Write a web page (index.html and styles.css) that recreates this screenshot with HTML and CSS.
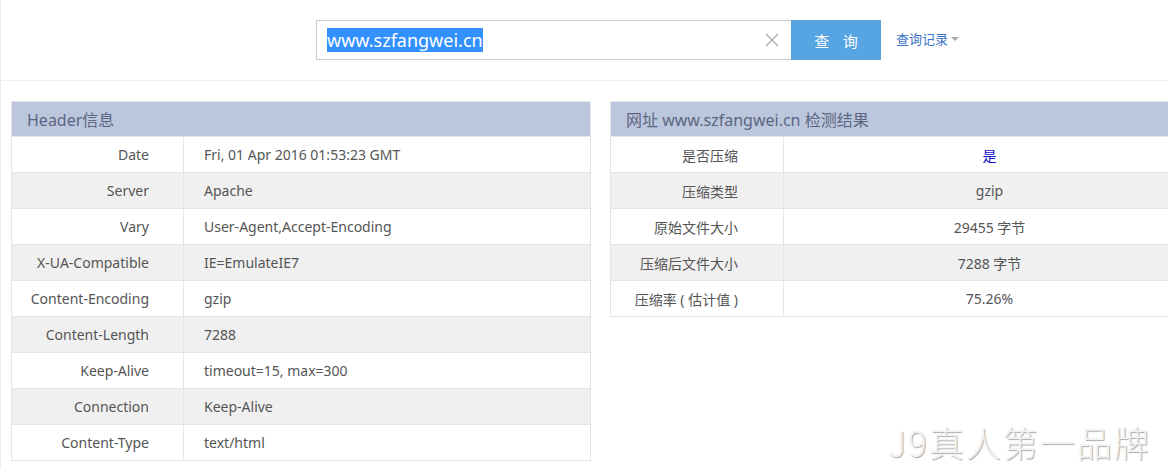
FILE: index.html
```html
<!DOCTYPE html>
<html lang="zh-CN">
<head>
<meta charset="utf-8">
<title>Gzip 检测</title>
<link rel="stylesheet" href="styles.css">
</head>
<body>
<div class="topbar">
  <div class="search">
    <div class="search-box">
      <span class="query"><span class="sel">www.szfangwei.cn</span></span>
      <svg class="clear" width="14" height="14" viewBox="0 0 14 14"><path d="M1 1L13 13M13 1L1 13" stroke="#aaa" stroke-width="1.2" fill="none"/></svg>
    </div>
    <button class="search-btn">查 询</button>
    <a class="history">查询记录<span class="caret"></span></a>
  </div>
</div>
<div class="content">
  <table class="info headers">
    <thead><tr><th colspan="2">Header信息</th></tr></thead>
    <tbody>
      <tr><td class="k">Date</td><td class="v">Fri, 01 Apr 2016 01:53:23 GMT</td></tr>
      <tr><td class="k">Server</td><td class="v">Apache</td></tr>
      <tr><td class="k">Vary</td><td class="v">User-Agent,Accept-Encoding</td></tr>
      <tr><td class="k">X-UA-Compatible</td><td class="v">IE=EmulateIE7</td></tr>
      <tr><td class="k">Content-Encoding</td><td class="v">gzip</td></tr>
      <tr><td class="k">Content-Length</td><td class="v">7288</td></tr>
      <tr><td class="k">Keep-Alive</td><td class="v">timeout=15, max=300</td></tr>
      <tr><td class="k">Connection</td><td class="v">Keep-Alive</td></tr>
      <tr><td class="k">Content-Type</td><td class="v">text/html</td></tr>
    </tbody>
  </table>
  <table class="info result">
    <thead><tr><th colspan="2">网址 www.szfangwei.cn 检测结果</th></tr></thead>
    <tbody>
      <tr><td class="k">是否压缩</td><td class="v yes">是</td></tr>
      <tr><td class="k">压缩类型</td><td class="v">gzip</td></tr>
      <tr><td class="k">原始文件大小</td><td class="v">29455 字节</td></tr>
      <tr><td class="k">压缩后文件大小</td><td class="v">7288 字节</td></tr>
      <tr><td class="k">压缩率 ( 估计值 )</td><td class="v">75.26%</td></tr>
    </tbody>
  </table>
</div>
<div class="brand">J9真人第一品牌</div>
</body>
</html>
```

FILE: styles.css
```css
html, body {
  margin: 0;
  padding: 0;
  overflow: hidden;
  height: 100%;
}
body {
  font-family: "Noto Sans", "Noto Sans CJK SC", sans-serif;
  font-size: 14px;
  color: #555;
  background: #fff;
  border-left: 1px solid #eee;
  box-sizing: border-box;
  position: relative;
}
.topbar {
  height: 80px;
  border-bottom: 1px solid #eee;
  box-sizing: content-box;
}
.search {
  display: flex;
  align-items: center;
  padding: 20px 0 0 315px;
}
.search-box {
  height: 38px;
  border: 1px solid #c4cadb;
  border-right: none;
  display: flex;
  align-items: center;
  justify-content: space-between;
  padding: 0 10px 0 10px;
  box-sizing: content-box;
  width: 454px;
}
.query {
  font-size: 18px;
  line-height: 22px;
}
.sel {
  background: #3390ff;
  color: #fff;
}
.clear {
  margin-right: 2px;
}
.search-btn {
  width: 90px;
  height: 40px;
  border: none;
  background: #56a5e2;
  color: #fff;
  font-family: "Noto Sans CJK SC", sans-serif;
  font-size: 15px;
  letter-spacing: 5px;
  padding: 0 0 0 5px;
}
.history {
  margin-left: 15px;
  margin-top: -3px;
  color: #3a72c5;
  font-family: "Noto Sans CJK SC", sans-serif;
  font-size: 13px;
  display: flex;
  align-items: center;
}
.caret {
  width: 0;
  height: 0;
  border-left: 4px solid transparent;
  border-right: 4px solid transparent;
  border-top: 4px solid #aaa;
  margin-left: 3px;
}
.content {
  display: flex;
  align-items: flex-start;
  gap: 19px;
  padding: 20px 0 0 10px;
  width: 1300px;
}
.info {
  border-collapse: collapse;
  width: 580px;
  flex: none;
}
.info th {
  background: #bcc6dd;
  color: #5b6683;
  font-weight: normal;
  font-size: 16px;
  text-align: left;
  height: 34px;
  padding: 0 0 0 15px;
  border: 1px solid #e4e6ea;
  border-bottom: none;
}
.info td {
  border: 1px solid #e5e5e5;
  height: 35px;
  padding: 0;
}
.info tbody tr:nth-child(even) td {
  background: #f0f0f0;
}
.info td.k {
  width: 172px;
  text-align: right;
  padding-right: 34px;
  box-sizing: border-box;
}
.headers td.v {
  padding-left: 20px;
}
.result {
  width: 586px;
}
.result td.k {
  width: 173px;
  padding-right: 45px;
}
.result td.v {
  text-align: center;
}
.result td.yes {
  color: #1010c8;
}
.brand {
  position: absolute;
  left: 887px;
  top: 416px;
  font-family: "Noto Sans CJK SC", sans-serif;
  font-weight: 300;
  font-size: 35px;
  letter-spacing: 2px;
  color: #f2f2f2;
  text-shadow: 1px 1px 1px #aaa, -1px -1px 0 #fff;
}
```
